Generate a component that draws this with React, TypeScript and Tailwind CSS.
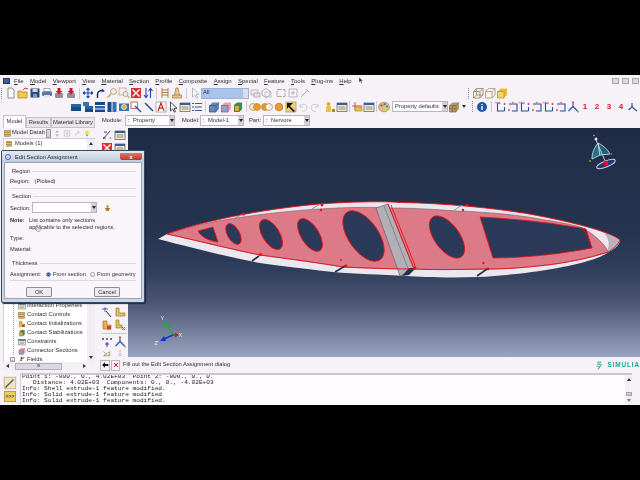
import type { ReactNode } from "react";

const menus = ["File", "Model", "Viewport", "View", "Material", "Section", "Profile", "Composite", "Assign", "Special", "Feature", "Tools", "Plug-ins", "Help"];

const treeRows: [string, string][] = [
  ["Interaction Properties", "table"],
  ["Contact Controls", "towerDb"],
  ["Contact Initializations", "lShapeRed"],
  ["Contact Stabilizations", "greenCube"],
  ["Constraints", "table"],
  ["Connector Sections", "pinkCube"],
];

const icons: Record<string, ReactNode> = {
  doc: <path d="M3 1h4l2 2v8H3z" fill="#fff" stroke="#8a8a8a" />,
  open: (
    <>
      <path d="M1 4h3l1 1h5v6H1z" fill="#f0c84a" stroke="#a07a20" strokeWidth=".7" />
      <path d="M6 3l2-2 3 1" fill="none" stroke="#d8301c" />
    </>
  ),
  save: (
    <>
      <rect x="1.5" y="1.5" width="9" height="9" fill="#2f4a78" />
      <rect x="3.5" y="2" width="5" height="3" fill="#cfd8ea" />
      <rect x="4" y="7" width="4" height="3" fill="#8796b5" />
    </>
  ),
  print: (
    <>
      <rect x="3" y="1.5" width="6" height="3" fill="#fff" stroke="#777" strokeWidth=".6" />
      <rect x="1" y="4.5" width="10" height="4.5" rx="1" fill="#5d78a8" />
      <rect x="3" y="8" width="6" height="2.5" fill="#dfe4ee" />
    </>
  ),
  redArrow: (
    <>
      <rect x="2" y="6" width="8" height="5" rx="1" fill="#8b8fa0" />
      <path d="M4.5 1h3v3h2L6 7.5 2.5 4h2z" fill="#d4162a" />
    </>
  ),
  move: <path d="M6 1v10M1 6h10M6 1L4.5 3M6 1l1.5 2M6 11L4.5 9M6 11l1.5-2M1 6l2-1.5M1 6l2 1.5M11 6L9 4.5M11 6L9 7.5" fill="none" stroke="#1c48a8" strokeWidth="1.1" />,
  rotate: (
    <>
      <path d="M3.5 11V7a4 4 0 0 1 6-3" fill="none" stroke="#1b2a6a" strokeWidth="1.5" />
      <path d="M8 1.5l3 2.5-3.5 1.5z" fill="#1c48a8" />
    </>
  ),
  zoom: (
    <>
      <circle cx="7.5" cy="4.5" r="3" fill="#f4ead8" stroke="#b9a88f" />
      <path d="M5 7l-3.5 3.5" stroke="#c9a868" strokeWidth="1.6" />
    </>
  ),
  boxZoom: (
    <>
      <rect x="1" y="1" width="7" height="7" fill="none" stroke="#cf8a8a" strokeWidth=".7" />
      <circle cx="7.5" cy="7" r="2.5" fill="#eee" stroke="#b9a88f" />
      <path d="M9.5 9l2 2" stroke="#c9a868" strokeWidth="1.2" />
    </>
  ),
  fit: (
    <>
      <rect x="1" y="1" width="10" height="10" fill="#d9322a" />
      <path d="M2.5 2.5l7 7M9.5 2.5l-7 7" stroke="#fff" strokeWidth="1.4" />
    </>
  ),
  updown: <path d="M4 1v9M2 8l2 2.5L6 8M8.5 11V2M6.5 4l2-2.5 2 2.5" fill="none" stroke="#1c48a8" strokeWidth="1.1" />,
  ladder: <path d="M3 1v10M9 1v10M3 3h6M3 5.5h6M3 8h6" fill="none" stroke="#a5763a" strokeWidth=".9" />,
  tower: <path d="M5 1h2l1.5 7h2v3h-9V8h2zM3 8h6" fill="#e6c88a" stroke="#a5763a" strokeWidth=".7" />,
  cursor: <path d="M3.5 1v9l2.2-2 1.6 3.2 1.2-.6L7 7.4h3z" fill="#fff" stroke="#9a9aa8" strokeWidth=".7" />,
  cursorBlack: <path d="M3.5 1v9l2.2-2 1.6 3.2 1.2-.6L7 7.4h3z" fill="#fff" stroke="#222" strokeWidth=".8" />,
  stack: (
    <>
      <rect x="2" y="3" width="7" height="5" fill="#f1e9f2" stroke="#a9a4ad" strokeWidth=".7" />
      <rect x="5" y="6" width="6" height="4" fill="#e4dce6" stroke="#a9a4ad" strokeWidth=".7" />
    </>
  ),
  ghost: (
    <>
      <path d="M1 4l4-2.5 4 2.5v4l-4 2.5L1 8z" fill="none" stroke="#b4b0b8" />
      <rect x="4" y="5" width="6" height="5" fill="none" stroke="#b4b0b8" strokeWidth=".7" />
    </>
  ),
  ghostBox: <rect x="2" y="2.5" width="8" height="7" fill="none" stroke="#aaa6ae" strokeDasharray="5 1" />,
  wireCube: <path d="M1.5 4.5h6.5v6.5H1.5zM1.5 4.5l3-3h6.5l-3 3M8 11l3-3V1.5M4.5 1.5V8h6.5M1.5 11l3-3" fill="none" stroke="#94825a" strokeWidth=".8" />,
  hollowCube: <path d="M1.5 4.5h6.5v6.5H1.5zM1.5 4.5l3-3h6.5v6.5l-3 3M8 4.5l3-3" fill="#f8f4f0" stroke="#a39576" strokeWidth=".8" />,
  solidCube: (
    <>
      <path d="M1.5 4.5l3-3h6.5v6.5l-3 3H1.5z" fill="#e8b93a" />
      <path d="M1.5 4.5h6.5v6.5H1.5z" fill="#f2d36a" stroke="#a8842c" strokeWidth=".6" />
    </>
  ),
  bar1: (
    <>
      <rect x="1" y="3" width="10" height="3" fill="#2d63a0" />
      <rect x="1" y="6" width="10" height="4" fill="#174a86" />
    </>
  ),
  bar2: (
    <>
      <rect x="1" y="1" width="6" height="4" fill="#3573b5" />
      <rect x="3" y="5" width="8" height="3" fill="#2463a5" />
      <rect x="3" y="8" width="8" height="3" fill="#174a86" />
    </>
  ),
  bar3: (
    <>
      <rect x="1" y="1" width="10" height="3" fill="#174a86" />
      <rect x="1" y="5" width="10" height="2.5" fill="#2d63a0" />
      <rect x="1" y="8.5" width="10" height="2.5" fill="#174a86" />
    </>
  ),
  bar4: (
    <>
      <rect x="1.5" y="1" width="4" height="10" fill="#174a86" />
      <rect x="6.5" y="1" width="4" height="10" fill="#3573b5" />
    </>
  ),
  lens: (
    <>
      <rect x="1" y="2.5" width="10" height="7.5" fill="#3573b5" />
      <circle cx="6" cy="6" r="2.5" fill="#f0a62a" stroke="#fff" strokeWidth=".7" />
    </>
  ),
  boxLine: (
    <>
      <rect x="1" y="1" width="6.5" height="6.5" fill="#fff" stroke="#b5302a" strokeWidth=".7" />
      <path d="M5 5l6 6" stroke="#1c48a8" strokeWidth="1.2" />
    </>
  ),
  line: <path d="M2 2l8 8" stroke="#173f8a" strokeWidth="1.2" />,
  letterA: (
    <>
      <rect x="1" y="1" width="10" height="10" fill="#fff" stroke="#7f7f7f" strokeWidth=".6" />
      <path d="M3 10l3-8 3 8M4.2 7.2h3.6" fill="none" stroke="#c3261e" strokeWidth="1.2" />
    </>
  ),
  table: (
    <>
      <rect x="1" y="2" width="10" height="8.5" fill="#f2ebd9" stroke="#5f6b80" strokeWidth=".8" />
      <rect x="1" y="2" width="10" height="2" fill="#365f9a" />
      <path d="M2.5 6h7M2.5 8h7" stroke="#9a8a62" />
    </>
  ),
  list: <path d="M1 2.5h2M1 6h2M1 9.5h2M4 2.5h7M4 6h7M4 9.5h7" stroke="#3c5a8c" />,
  blueCube: (
    <>
      <path d="M1.5 4.5l3-3h6.5v6.5l-3 3H1.5z" fill="#6a86b8" />
      <path d="M1.5 4.5h6.5v6.5H1.5zM8 4.5l3-3" fill="none" stroke="#2e4a80" strokeWidth=".7" />
    </>
  ),
  pinkCube: (
    <>
      <path d="M1.5 4.5l3-3h6.5v6.5l-3 3H1.5z" fill="#e4a2b8" />
      <path d="M1.5 4.5h6.5v6.5H1.5z" fill="#8ea4cf" stroke="#c83a5a" strokeWidth=".7" />
    </>
  ),
  greenCube: (
    <>
      <path d="M2 4l3-2.5h5V8l-2.5 3H2z" fill="#3f8a4e" />
      <rect x="3" y="5" width="4" height="5" fill="#d8a93a" />
    </>
  ),
  twoCircles: (
    <>
      <circle cx="4" cy="6" r="3.5" fill="#f2e5cf" stroke="#a98a52" strokeWidth=".7" />
      <circle cx="8" cy="6" r="3.5" fill="#eb9a2c" stroke="#a98a52" strokeWidth=".7" />
    </>
  ),
  twoCircles2: (
    <>
      <circle cx="4" cy="6" r="3.5" fill="#eb9a2c" stroke="#a98a52" strokeWidth=".7" />
      <circle cx="8" cy="6" r="3.5" fill="#f6efe2" stroke="#a98a52" strokeWidth=".7" />
    </>
  ),
  circle: <circle cx="6" cy="6" r="3.8" fill="#eb9a2c" stroke="#a8783a" strokeWidth=".7" />,
  blackFlag: (
    <>
      <rect x="1" y="1" width="10" height="10" fill="#f4cf78" stroke="#98853f" strokeWidth=".6" />
      <path d="M2 2h6L5 5l5 5-1.5 1-5-5-1.5 2z" fill="#17181c" />
    </>
  ),
  undo: <path d="M3 6a3.5 3.5 0 1 1 2 4M3 3v3h3" fill="none" stroke="#c8c4cc" strokeWidth=".9" />,
  redo: <path d="M9 6a3.5 3.5 0 1 0-2 4M9 3v3H6" fill="none" stroke="#c8c4cc" strokeWidth=".9" />,
  person: (
    <>
      <circle cx="4.5" cy="3" r="2" fill="#e3a93a" />
      <rect x="2" y="5" width="5" height="6" fill="#e8c058" />
      <rect x="8" y="8" width="3" height="3" fill="#a8842c" />
    </>
  ),
  redTool: (
    <>
      <path d="M4 1v8M1 5h10" stroke="#d4362a" strokeWidth=".9" />
      <rect x="4" y="6" width="7" height="4" fill="#e8c058" stroke="#9a7a30" strokeWidth=".6" />
    </>
  ),
  palette: (
    <>
      <ellipse cx="6" cy="6" rx="5.5" ry="4.8" fill="#d8c08a" stroke="#8a6a3a" strokeWidth=".5" />
      <circle cx="3.5" cy="4.5" r="1.1" fill="#d8322a" />
      <circle cx="6.5" cy="3.2" r="1.1" fill="#3a6fc0" />
      <circle cx="9" cy="5.5" r="1.1" fill="#3f9a4a" />
      <circle cx="7.5" cy="8.3" r="1.1" fill="#f0d030" />
    </>
  ),
  tanCube: (
    <>
      <path d="M1.5 4.5l3-3h6.5v6.5l-3 3H1.5z" fill="#b49a68" />
      <path d="M1.5 4.5h6.5v6.5H1.5zM8 4.5l3-3M4.5 4.5v6.5M1.5 7.7H8" fill="none" stroke="#6e5a32" strokeWidth=".6" />
    </>
  ),
  info: (
    <>
      <circle cx="6" cy="6" r="5" fill="#1e56a8" />
      <path d="M6 5v4M6 3v1" stroke="#fff" strokeWidth="1.4" />
    </>
  ),
  axes: (
    <>
      <path d="M2.5 2v8h7M2.5 2h3M9.5 10V6" fill="none" stroke="#1f4fa5" strokeWidth="1.1" />
      <circle cx="9.5" cy="3" r=".9" fill="#d4362a" />
      <circle cx="1" cy="1.5" r=".7" fill="#d4362a" />
    </>
  ),
  axes2: (
    <>
      <path d="M2 3h8v7H5" fill="none" stroke="#1f4fa5" strokeWidth="1.1" />
      <circle cx="2" cy="9" r=".9" fill="#d4362a" />
      <circle cx="6" cy="1.5" r=".7" fill="#d4362a" />
    </>
  ),
  tripod: (
    <>
      <path d="M6 5.5V1.5M6 5.5L1.5 10M6 5.5l4.5 4.5" fill="none" stroke="#1f4fa5" strokeWidth="1.1" />
      <circle cx="6" cy="1.2" r=".9" fill="#d4362a" />
      <circle cx="11" cy="10.8" r=".8" fill="#d4362a" />
    </>
  ),
  tripodRed: (
    <>
      <path d="M5 6V2M5 6l-3.5 3M5 6l5 4" fill="none" stroke="#1f4fa5" strokeWidth="1.1" />
      <circle cx="5" cy="6" r="1" fill="#d4362a" />
    </>
  ),
  formula: (
    <>
      <path d="M2 10l7-8" stroke="#1c48a8" strokeWidth="1" />
      <path d="M3 3h3M2 9h3" stroke="#333" strokeWidth=".9" />
      <circle cx="9.5" cy="9" r="1.1" fill="#c9a868" />
    </>
  ),
  cutter: (
    <>
      <path d="M1 3h6M4 1v5" stroke="#1c48a8" strokeWidth=".8" />
      <path d="M5 5l5 6" stroke="#333" strokeWidth="1" />
    </>
  ),
  lShape: <path d="M2 2h3v5h6v3H2z" fill="#e8c058" stroke="#9a7a30" strokeWidth=".7" />,
  lShapeRed: (
    <>
      <path d="M2 2h4v4h4v4H2z" fill="#e8b63a" stroke="#8a6a28" strokeWidth=".6" />
      <rect x="6" y="7" width="4" height="3.5" fill="#c94a2a" />
    </>
  ),
  lShapeX: (
    <>
      <path d="M2 1h3v5h3v3H2z" fill="#e8c058" stroke="#8a6a28" strokeWidth=".6" />
      <path d="M8 8l3 3M11 8l-3 3" stroke="#d4362a" />
    </>
  ),
  xyz: (
    <>
      <path d="M6 6v5M4 8h4" stroke="#1c48a8" />
      <circle cx="2" cy="3" r=".9" fill="#333" />
      <circle cx="6" cy="3" r=".9" fill="#333" />
      <circle cx="10" cy="3" r=".9" fill="#333" />
    </>
  ),
  triangleTool: <path d="M1 10h9V4zM1 4l3 3" fill="none" stroke="#7a6a3a" strokeWidth=".9" />,
  dotted: <path d="M6 2v1.5M6 6v1.5M6 9v1.5" stroke="#d4362a" strokeWidth="1.4" />,
  towerDb: (
    <>
      <rect x="1" y="2" width="9" height="3" fill="#d8b048" stroke="#6a5520" strokeWidth=".5" />
      <rect x="1" y="5" width="9" height="3" fill="#e2c468" stroke="#6a5520" strokeWidth=".5" />
      <rect x="1" y="8" width="9" height="3" fill="#d8b048" stroke="#6a5520" strokeWidth=".5" />
    </>
  ),
  upDownGrey: <path d="M6 1L3.5 4.5h5zM6 11L3.5 7.5h5z" fill="#b0acb4" />,
  ghostDoc: <path d="M2 2h8v8H2zM5 5h2v2H5z" fill="none" stroke="#aaa6ae" strokeWidth=".8" />,
  ghostPencil: <path d="M2 10L9 3M7 2l3 3" fill="none" stroke="#aaa6ae" />,
  bulb: (
    <>
      <circle cx="6" cy="4.5" r="3" fill="#f4dd40" />
      <rect x="4.8" y="7.5" width="2.4" height="2.5" fill="#8a8a8a" />
    </>
  ),
  star: (
    <>
      <circle cx="6" cy="3" r="2" fill="#d88a3a" />
      <path d="M1.5 6h9L8 11H4z" fill="#c87a2a" />
      <path d="M4 6h4" stroke="#5a3a1a" />
    </>
  ),
  pencil: (
    <>
      <rect x="1" y="1" width="10" height="10" fill="#efe3c4" stroke="#a89a7a" strokeWidth=".5" />
      <path d="M2.5 9.5L9 3" stroke="#5f6a52" strokeWidth="1.3" />
      <path d="M2 10l1.5-.5-1-1z" fill="#222" />
    </>
  ),
  back: <path d="M1.5 6L6 2v2.5h5v3H6V10z" fill="#111" />,
  cross: <path d="M3 3l6 6M9 3l-6 6" stroke="#d4162a" strokeWidth="1.5" />,
  hand: <path d="M4 1.5c1-.5 1.5 0 1.5 1V6l3 .5c1 .3 1 1 1 2L9 11H5L2.5 7.5c-.5-1 .5-1.500 1.500-.5z" fill="#e8e4ec" stroke="#77727c" strokeWidth=".7" />,
};

function Ico({ name, className = "w-[12px] h-[12px]" }: { name: string; className?: string }) {
  return (
    <svg viewBox="0 0 12 12" className={`${className} shrink-0`}>
      {icons[name]}
    </svg>
  );
}

function Icons({ names }: { names: string[] }) {
  return (
    <>
      {names.map((n, i) => (
        <Ico key={i} name={n} />
      ))}
    </>
  );
}

function Sep({ className }: { className: string }) {
  return (
    <div className={`${className} flex justify-center shrink-0`}>
      <div className="w-px h-[11px] bg-[#cfc9d2]" />
    </div>
  );
}

function Grip() {
  return <div className="w-[4px] h-[11px] shrink-0 border-l border-dotted border-[#8d8892] ml-[1px]" />;
}

function Combo({ text, className, spin }: { text: string; className: string; spin?: boolean }) {
  return (
    <div className={`${className} h-[11px] flex items-center bg-white border border-[#b9b4bd] shrink-0`}>
      {spin && <Ico name="upDownGrey" className="w-[5px] h-[9px]" />}
      <span className="flex-1 pl-[2px] truncate text-[5.8px] leading-none text-[#333]">{text}</span>
      <div className="w-[5px] h-full bg-[#d5d0d8] flex items-center justify-center">
        <div className="w-0 h-0 border-x-[2px] border-x-transparent border-t-[3px] border-t-[#222]" />
      </div>
    </div>
  );
}

function Viewport() {
  const hole = "#2b3a59";
  return (
    <div className="flex-1 bg-[linear-gradient(to_bottom,#1f2c46_0%,#26344f_45%,#2f3e5c_62%,#4a5573_76%,#9aa4c0_100%)]">
      <svg viewBox="128 128 512 229" className="block w-full h-full">
        {/* wing, outer band */}
        <path
          d="M158 239L167 234C200 222 260 209 320 204C345 202 385 201 400 202.5C440 203 500 208 540 216C580 224 610 232 620 240C619 247 605 255 597 258C570 268 520 275 477 277C450 278 420 277 407 276C380 274.5 355 274 333 272C300 268 270 265 250 261C220 255 185 246 158 239Z"
          fill="#ece6ee"
        />
        <path d="M608 234C616 238 619 240 620 240C620 246 612 251 606 253C610 247 610 240 604 233Z" fill="#b9b2bc" />
        {/* pink face */}
        <path
          d="M167 234C190 226 220 220 243 217C270 213 300 210 320 209C350 207 375 207 390 208C420 208 440 210 457 211C490 212 520 215 545 220C565 223 578 226 583 228C595 235 606 245 608 252C590 258 565 263 547 265C520 268 505 269 487 269C460 269.5 435 270 413 269C390 269 365 268 343 267C320 263 290 259 260 255C230 249 195 240 167 234Z"
          fill="#dc7a88"
          stroke="#6b6470"
          strokeWidth=".6"
        />
        {/* holes */}
        <g fill={hole} stroke="#f00c14" strokeWidth=".8">
          <path d="M198 231L213 227L218 242C210 241 202 238 198 231Z" />
          <ellipse cx="233.5" cy="234" rx="6" ry="11.5" transform="rotate(-30 233.5 234)" />
          <ellipse cx="271" cy="234.5" rx="8.5" ry="17" transform="rotate(-32 271 234.5)" />
          <ellipse cx="310" cy="235" rx="9" ry="18.5" transform="rotate(-32 310 235)" />
          <ellipse cx="363.5" cy="236" rx="15" ry="29" transform="rotate(-35 363.5 236)" />
          <ellipse cx="447" cy="237" rx="12.5" ry="24.5" transform="rotate(-36 447 237)" />
          <path d="M480 217C520 219 560 224 586 229L592 248C560 254 525 258 493 258Z" />
        </g>
        {/* central rib */}
        <path d="M376 208L388 204L414 269L400 276Z" fill="#b2afb6" stroke="#5a5660" strokeWidth=".6" />
        <path d="M384 206L409 271" stroke="#6a6670" strokeWidth=".6" />
        <path d="M402 276L409 268H416L409 275Z" fill="#22304b" />
        {/* red edges */}
        <g fill="none" stroke="#f00c14" strokeWidth=".9">
          <path d="M167 234C200 222 260 209 320 204C345 202 385 201 400 202.5C440 203 500 208 540 216C580 224 610 232 620 240" />
          <path d="M167 234C195 240 230 249 260 255C290 259 320 263 343 267C365 268 390 269 413 269C435 270 460 269.5 487 269C505 269 520 268 547 265C565 263 590 258 608 252C612 250 618 245 620 240" />
          <path d="M388 204L414 269M391 205L416 268" />
          <path d="M583 228L592 248" strokeWidth=".5" />
        </g>
        {/* rib stubs */}
        <g stroke="#22304b" strokeWidth="1.6">
          <path d="M252 261L259 256" />
          <path d="M335 272L345 266" />
          <path d="M477 276L487 269" />
        </g>
        <g stroke="#8d8a92" strokeWidth=".9">
          <path d="M235 218L243 214" />
          <path d="M312 209L320 204" />
          <path d="M453 211L462 205" />
        </g>
        <g fill="#f00c14">
          <circle cx="243.5" cy="214" r="1.6" />
          <circle cx="322" cy="205" r="1.4" />
          <circle cx="321" cy="210" r="1.2" />
          <circle cx="260.5" cy="254.5" r="1.6" />
          <circle cx="346" cy="266" r="1.4" />
          <circle cx="341" cy="260" r="1" />
          <circle cx="467" cy="205" r="1.4" />
          <circle cx="463" cy="210" r="1.2" />
          <circle cx="488" cy="269" r="1.4" />
          <circle cx="483.5" cy="263" r="1.2" />
          <circle cx="415" cy="268" r="1.2" />
        </g>
        {/* compass */}
        <g stroke="#d6cfee" strokeWidth=".9">
          <path d="M598 143C594 148 592 153 592 159L600 155Z" fill="#1e7482" />
          <path d="M598 143C604 146 608 150 610 154L600 155Z" fill="#186675" />
          <ellipse cx="606" cy="164" rx="10" ry="3" transform="rotate(-22 606 164)" fill="#2a3a66" />
          <path d="M596 140L606 163" />
        </g>
        <rect x="604" y="161" width="4" height="4" fill="#e01020" />
        <circle cx="596" cy="139" r="1.5" fill="#e6e0f2" />
        <circle cx="594" cy="135.5" r=".8" fill="#c8c060" />
        <circle cx="611.5" cy="154" r=".8" fill="#a8a040" />
        <circle cx="590" cy="161" r=".9" fill="#a8a040" />
        {/* triad */}
        <path d="M173 335L167 324" stroke="#12b23a" strokeWidth="1.4" />
        <path d="M165 321L163 327L169 325Z" fill="#12b23a" />
        <path d="M173 335L164 339" stroke="#1433c8" strokeWidth="1.6" />
        <path d="M160 341L166 341L164 336Z" fill="#1433c8" />
        <path d="M173 335L178 335" stroke="#e0101c" strokeWidth="1.4" />
        <path d="M178.5 335L175 332.5V337.5Z" fill="#e0101c" />
        <g fill="#f2f0f8" fontSize="5.5" fontFamily="Liberation Sans, sans-serif">
          <text x="160.5" y="320">Y</text>
          <text x="178.5" y="337">X</text>
          <text x="154.5" y="345">Z</text>
        </g>
      </svg>
    </div>
  );
}

function Legend({ text }: { text: string }) {
  return (
    <div className="h-[6px] flex items-center gap-[2px] pl-[2px]">
      <span>{text}</span>
      <div className="flex-1 h-px bg-[#dcd8de]" />
    </div>
  );
}

function Dialog() {
  return (
    <div className="absolute left-[1px] top-[150px] w-[144px] h-[153px] flex flex-col bg-[#c9d6e6] border border-[#39465c] rounded-[2px] shadow-[1px_1px_1px_#1c2740] text-[5.7px] leading-[6px] text-[#2f2f34]">
      <div className="h-[11px] flex items-center pl-[3px] bg-[linear-gradient(to_bottom,#e3e9f2,#bccbdd)] shrink-0">
        <div className="w-[6px] h-[6px] rounded-full border border-[#5d59b0] mr-[4px]" />
        <span className="text-[#2b2b33] text-[5.8px]">Edit Section Assignment</span>
        <div className="ml-auto mr-[2px] w-[22px] h-[7px] bg-[linear-gradient(to_bottom,#dd7a70,#b8362c)] rounded-b-[2px] text-white text-[6px] font-bold flex items-center justify-center">x</div>
      </div>
      <div className="flex-1 mx-[2px] mb-[3px] bg-[#f9f5fa] border border-[#9aa6b6] px-[5px] pt-[5px] flex flex-col">
        <Legend text="Region" />
        <div className="mt-[4px] h-[6px] flex gap-[5px]">
          <span>Region:</span>
          <span>(Picked)</span>
        </div>
        <div className="mt-[4px] h-px bg-[#dcd8de] shrink-0" />
        <div className="mt-[4px]">
          <Legend text="Section" />
        </div>
        <div className="mt-[3px] flex items-center">
          <span className="w-[22px]">Section:</span>
          <Combo text="" className="w-[65px]" />
          <Ico name="star" className="ml-[7px] w-[7px] h-[8px]" />
        </div>
        <div className="mt-[4px] flex">
          <b className="w-[19px] shrink-0">Note:</b>
          <span className="leading-[7px]">
            List contains only sections
            <br />
            applicable to the selected regions.
          </span>
        </div>
        <span className="mt-[4px] h-[6px]">Type:</span>
        <span className="mt-[5px] h-[6px]">Material:</span>
        <div className="mt-[8px]">
          <Legend text="Thickness" />
        </div>
        <div className="mt-[5px] h-[6px] flex items-center">
          <span className="w-[36px]">Assignment:</span>
          <div className="w-[5px] h-[5px] rounded-full border border-[#8a96aa] bg-[#2f5fa8]" />
          <span className="ml-[2px] w-[37px]">From section</span>
          <div className="w-[5px] h-[5px] rounded-full border border-[#9a9aa2] bg-white" />
          <span className="ml-[2px]">From geometry</span>
        </div>
        <div className="mt-[3px] h-px bg-[#dcd8de] shrink-0" />
        <div className="mt-[6px] flex justify-between px-[16px]">
          <div className="w-[26px] h-[10px] border border-[#8f8c94] bg-[#eeeaf0] rounded-[1px] flex items-center justify-center">OK</div>
          <div className="w-[26px] h-[10px] border border-[#8f8c94] bg-[#eeeaf0] rounded-[1px] flex items-center justify-center">Cancel</div>
        </div>
      </div>
      {/* mouse pointer over the note */}
      <Ico name="hand" className="absolute left-[32px] top-[73px] w-[8px] h-[8px]" />
    </div>
  );
}

export default function App() {
  return (
    <div className="relative w-[640px] h-[480px] bg-black pt-[75px] pb-[75px] overflow-hidden font-['Liberation_Sans',sans-serif] blur-[0.35px]">
      <div className="h-[330px] flex flex-col bg-[#f7f1f8] text-[#2f2f34]">
        {/* menu bar */}
        <div className="h-[11px] flex items-center text-[6px] leading-none shrink-0">
          <div className="w-[7px] h-[6px] ml-[3px] bg-[#3a5fa0] border border-[#24385e] shrink-0" />
          <div className="flex gap-[6.3px] ml-[4px]">
            {menus.map((m) => (
              <span key={m}>
                <span className="underline">{m[0]}</span>
                {m.slice(1)}
              </span>
            ))}
          </div>
          <svg viewBox="0 0 12 12" className="w-[7px] h-[7px] ml-[6px]">
            <path d="M2 1v8l2-2 2 4 1-.5L5 6.5h3z" fill="#333" />
          </svg>
          <div className="ml-auto mr-[1px] flex gap-[3px]">
            <div className="w-[7px] h-[6px] bg-[#dcd9e2] border border-[#aaa6b2]" />
            <div className="w-[7px] h-[6px] bg-[#dcd9e2] border border-[#aaa6b2]" />
            <div className="w-[7px] h-[6px] bg-[#dcd9e2] border border-[#aaa6b2]" />
          </div>
        </div>

        {/* toolbar 1 */}
        <div className="h-[14px] flex items-center shrink-0">
          <Grip />
          <Icons names={["doc", "open", "save", "print", "redArrow", "redArrow"]} />
          <Sep className="w-[5px]" />
          <Icons names={["move", "rotate", "zoom", "boxZoom", "fit", "updown"]} />
          <Sep className="w-[5px]" />
          <Icons names={["ladder", "tower"]} />
          <Sep className="w-[6px]" />
          <Ico name="cursor" />
          <div className="w-[48px] h-[11px] bg-[#a9c4ec] border border-[#9fb4d4] flex items-center text-[5.8px] leading-none pl-[1px] shrink-0">
            All
            <div className="ml-auto w-[5px] h-full bg-[#dfdbe3]" />
          </div>
          <Icons names={["stack", "ghost"]} />
          <div className="w-[2px] shrink-0" />
          <Icons names={["ghostBox", "ghostDoc", "ghostPencil"]} />
          <div className="w-[156px] shrink-0" />
          <Grip />
          <Icons names={["wireCube", "hollowCube", "solidCube"]} />
        </div>

        {/* toolbar 2 */}
        <div className="h-[13px] flex items-center pl-[70px] shrink-0">
          <Icons names={["bar1", "bar2", "bar3", "bar4", "lens", "boxLine"]} />
          <div className="w-px shrink-0" />
          <Icons names={["line", "letterA", "cursorBlack", "table", "list"]} />
          <Sep className="w-[5px]" />
          <Icons names={["blueCube", "pinkCube", "greenCube"]} />
          <Sep className="w-[5px]" />
          <Icons names={["twoCircles", "twoCircles2", "circle", "blackFlag", "undo", "redo"]} />
          <div className="w-[3px] shrink-0" />
          <Icons names={["person", "table"]} />
          <Sep className="w-[3px]" />
          <Icons names={["redTool", "table"]} />
          <Sep className="w-[3px]" />
          <Ico name="palette" />
          <Combo text="Property defaults" className="ml-[2px] w-[56px]" />
          <Ico name="tanCube" />
          <div className="w-[8px] flex justify-center shrink-0">
            <div className="w-0 h-0 border-x-[2px] border-x-transparent border-t-[3px] border-t-[#333]" />
          </div>
          <div className="w-[3px] shrink-0" />
          <Grip />
          <Ico name="info" />
          <Sep className="w-[7px]" />
          <Icons names={["axes", "axes2", "axes", "axes2", "axes", "axes2", "tripod"]} />
          <div className="flex text-[#d11a2a] font-bold text-[8px] leading-none">
            <span className="w-[12px] text-center">1</span>
            <span className="w-[12px] text-center">2</span>
            <span className="w-[12px] text-center">3</span>
            <span className="w-[12px] text-center">4</span>
          </div>
          <Ico name="tripodRed" />
        </div>

        {/* tabs and module row */}
        <div className="h-[15px] flex items-end shrink-0 text-[5.8px] leading-none">
          <div className="flex items-end pl-[3px] w-[98px] shrink-0">
            <div className="w-[23px] h-[13px] bg-white border border-b-0 border-[#c7c2ca] flex items-center justify-center">Model</div>
            <div className="w-[25px] h-[11px] bg-[#e9e4ea] border border-[#c7c2ca] flex items-center justify-center">Results</div>
            <div className="w-[44px] h-[11px] bg-[#e9e4ea] border border-[#c7c2ca] flex items-center justify-center whitespace-nowrap">Material Library</div>
          </div>
          <div className="h-full flex items-center pl-[4px]">
            <span className="w-[23px]">Module:</span>
            <Combo spin text="Property" className="w-[50px]" />
            <span className="ml-[7px] w-[18px]">Model:</span>
            <Combo spin text="Model-1" className="w-[44px]" />
            <span className="ml-[5px] w-[14px]">Part:</span>
            <Combo spin text="Nervure" className="w-[47px]" />
          </div>
        </div>

        {/* main area */}
        <div className="flex-1 flex min-h-0">
          {/* model tree */}
          <div className="w-[95px] shrink-0 flex flex-col text-[5.8px] leading-none pl-[3px] pb-[3px]">
            <div className="h-[10px] flex items-center shrink-0 pl-[1px]">
              <Ico name="towerDb" className="w-[8px] h-[8px]" />
              <span className="w-[34px] shrink-0 whitespace-nowrap">Model Datab</span>
              <div className="w-[5px] h-[9px] bg-[#d5d0d8] border border-[#9d98a2] shrink-0" />
              <Ico name="upDownGrey" className="w-[8px] h-[9px] ml-[2px]" />
              <Ico name="ghostDoc" className="w-[8px] h-[9px] ml-[2px]" />
              <Ico name="ghostPencil" className="w-[8px] h-[9px] ml-[2px]" />
              <Ico name="bulb" className="w-[8px] h-[9px] ml-[2px]" />
            </div>
            <div className="flex-1 flex min-h-0 bg-white border-l border-t border-[#d2cdd5]">
              <div className="flex-1 overflow-hidden min-w-0">
                <div className="h-[9px] flex items-center pl-[2px]">
                  <Ico name="towerDb" className="w-[7px] h-[7px] mr-[2px]" />
                  Models (1)
                </div>
                {/* rows that the dialog covers */}
                <div className="h-[153px]" />
                <div className="ml-[9px] border-l border-dotted border-[#9c98a2]">
                  {treeRows.map(([label, icon]) => (
                    <div key={label} className="h-[9px] flex items-center whitespace-nowrap pl-[4px]">
                      <Ico name={icon} className="w-[8px] h-[8px] mr-[1px]" />
                      {label}
                    </div>
                  ))}
                </div>
                <div className="h-[9px] flex items-center pl-[6px]">
                  <div className="w-[5px] h-[5px] border border-[#9c98a2] text-[4px] flex items-center justify-center mr-[3px]">+</div>
                  <i className="w-[8px] mr-[1px] font-bold font-['Liberation_Serif',serif] text-[7px] text-center">F</i>
                  Fields
                </div>
              </div>
              <div className="w-[8px] flex flex-col items-center justify-between py-[3px] bg-[#f1ecf2] shrink-0">
                <div className="w-0 h-0 border-x-[2px] border-x-transparent border-b-[3px] border-b-[#333]" />
                <div className="w-0 h-0 border-x-[2px] border-x-transparent border-t-[3px] border-t-[#333]" />
              </div>
            </div>
            <div className="h-[8px] flex items-center bg-[#f4eff5] shrink-0 pl-[3px] pr-[9px] justify-between">
              <div className="w-0 h-0 border-y-[2px] border-y-transparent border-r-[3px] border-r-[#333]" />
              <div className="w-[47px] h-[7px] mr-[15px] bg-[#dcd8e2] border border-[#b0acb8] text-[4px] flex items-center justify-center">III</div>
              <div className="w-0 h-0 border-y-[2px] border-y-transparent border-l-[3px] border-l-[#333]" />
            </div>
          </div>

          <div className="flex-1 flex flex-col min-w-0">
            <div className="flex-1 flex min-h-0">
              {/* toolbox */}
              <div className="w-[33px] shrink-0 flex flex-col justify-between pt-[1px] pl-[6px]">
                <div className="grid grid-cols-2 w-[26px] gap-y-px">
                  <Icons names={["formula", "table", "fit", "table"]} />
                </div>
                <div className="grid grid-cols-2 w-[26px]">
                  <Ico name="cutter" />
                  <Ico name="lShape" />
                  <Ico name="lShapeRed" className="w-[12px] h-[12px] mt-[1px]" />
                  <Ico name="lShapeX" className="w-[12px] h-[12px] mt-[1px]" />
                  <div className="col-span-2 h-[5px] flex items-center">
                    <div className="w-full h-px bg-[#cfc9d2]" />
                  </div>
                  <Ico name="xyz" />
                  <Ico name="tripod" />
                  <Ico name="triangleTool" className="w-[12px] h-[8px] mt-[1px]" />
                  <Ico name="dotted" className="w-[12px] h-[8px] mt-[1px]" />
                </div>
              </div>
              <Viewport />
            </div>
            {/* prompt */}
            <div className="h-[16px] shrink-0 flex items-center pl-[5px] text-[5.75px] leading-none">
              <div className="w-[10px] h-[11px] border border-[#bcb7bf] flex items-center justify-center">
                <Ico name="back" className="w-[8px] h-[8px]" />
              </div>
              <div className="w-[9px] h-[11px] border border-[#bcb7bf] flex items-center justify-center ml-px">
                <Ico name="cross" className="w-[8px] h-[8px]" />
              </div>
              <span className="ml-[3px]">Fill out the Edit Section Assignment dialog</span>
              <div className="ml-auto flex items-center text-[#1aa89a] text-[6.4px] font-bold tracking-[0.9px] whitespace-nowrap">
                <svg viewBox="0 0 12 12" className="w-[9px] h-[11px] mr-[3px]">
                  <path d="M3 1.5h5L5 5h4L4 11l2-4H2M3 5l2-3.5" fill="none" stroke="#1aa89a" strokeWidth="1" />
                </svg>
                SIMULIA
              </div>
            </div>
          </div>
        </div>

        {/* message area */}
        <div className="h-[32px] shrink-0 flex">
          <div className="w-[20px] flex flex-col items-center pt-[3px] gap-[1px] shrink-0">
            <Ico name="pencil" className="w-[14px] h-[14px]" />
            <div className="w-[12px] h-[11px] bg-[#f4d04e] border border-[#b5a04a] text-[#23408c] text-[5px] font-bold leading-none flex items-center justify-center">&gt;&gt;&gt;</div>
          </div>
          <div className="w-[612px] flex bg-[#fefcff] border-t-2 border-[#cbc6cf] border-l border-l-[#d6d1d9] overflow-hidden">
            <div className="flex-1 flex flex-col justify-end pl-[1px] pb-[1px] font-['Liberation_Mono',monospace] text-[6.15px] leading-[6px] whitespace-pre overflow-hidden text-[#222]">
              <div>Point 1: -800., 0., 4.02E+03  Point 2: -800., 0., 0.</div>
              <div>   Distance: 4.02E+03  Components: 0., 0., -4.02E+03</div>
              <div>Info: Shell extrude-1 feature modified.</div>
              <div>Info: Solid extrude-1 feature modified</div>
              <div>Info: Solid extrude-1 feature modified.</div>
            </div>
            <div className="w-[7px] flex flex-col items-center justify-between py-[3px] bg-[#f4eff5] shrink-0">
              <div className="w-0 h-0 border-x-[2px] border-x-transparent border-b-[3px] border-b-[#333]" />
              <div className="mt-auto mb-[3px] w-[6px] h-[4px] bg-[#cfcbd4] border border-[#a6a2ae]" />
              <div className="w-0 h-0 border-x-[2px] border-x-transparent border-t-[3px] border-t-[#777]" />
            </div>
          </div>
        </div>
      </div>
      <Dialog />
    </div>
  );
}
